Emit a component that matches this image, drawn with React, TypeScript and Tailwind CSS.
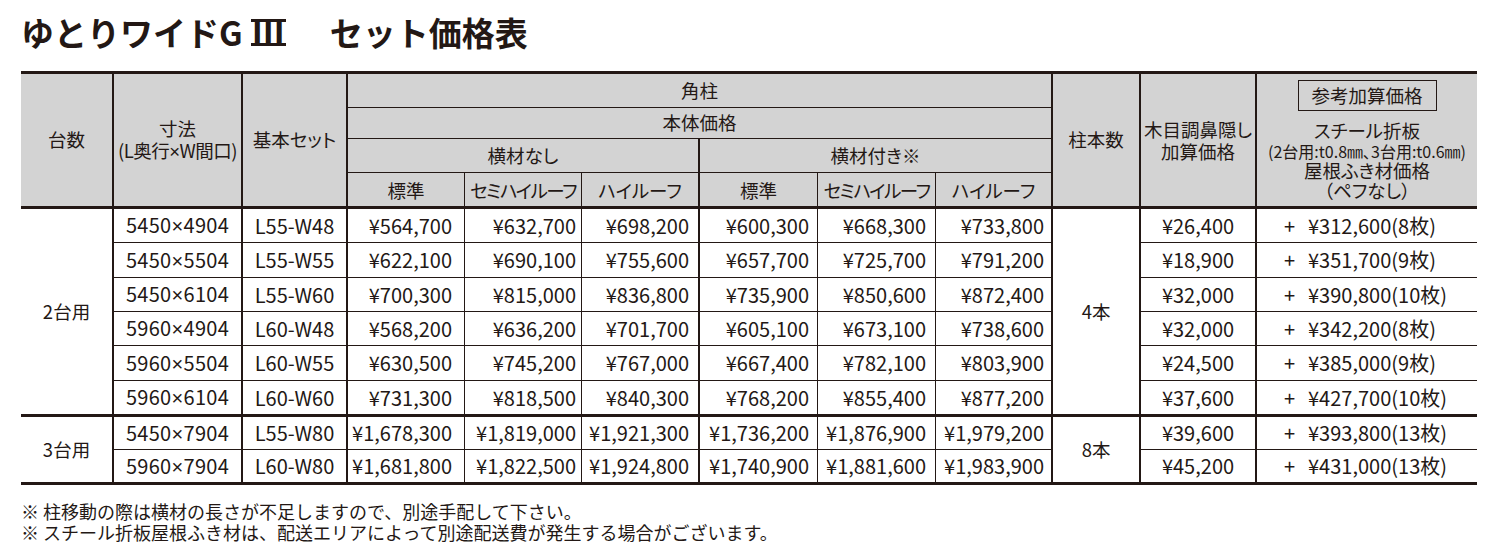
import React from "react";

type Row = { cells: string[]; h: string };

const rows2: string[][] = [
  ["5450×4904", "L55-W48", "¥564,700", "¥632,700", "¥698,200", "¥600,300", "¥668,300", "¥733,800", "¥26,400", "¥312,600(8枚)"],
  ["5450×5504", "L55-W55", "¥622,100", "¥690,100", "¥755,600", "¥657,700", "¥725,700", "¥791,200", "¥18,900", "¥351,700(9枚)"],
  ["5450×6104", "L55-W60", "¥700,300", "¥815,000", "¥836,800", "¥735,900", "¥850,600", "¥872,400", "¥32,000", "¥390,800(10枚)"],
  ["5960×4904", "L60-W48", "¥568,200", "¥636,200", "¥701,700", "¥605,100", "¥673,100", "¥738,600", "¥32,000", "¥342,200(8枚)"],
  ["5960×5504", "L60-W55", "¥630,500", "¥745,200", "¥767,000", "¥667,400", "¥782,100", "¥803,900", "¥24,500", "¥385,000(9枚)"],
  ["5960×6104", "L60-W60", "¥731,300", "¥818,500", "¥840,300", "¥768,200", "¥855,400", "¥877,200", "¥37,600", "¥427,700(10枚)"],
];
const rows3: string[][] = [
  ["5450×7904", "L55-W80", "¥1,678,300", "¥1,819,000", "¥1,921,300", "¥1,736,200", "¥1,876,900", "¥1,979,200", "¥39,600", "¥393,800(13枚)"],
  ["5960×7904", "L60-W80", "¥1,681,800", "¥1,822,500", "¥1,924,800", "¥1,740,900", "¥1,881,600", "¥1,983,900", "¥45,200", "¥431,000(13枚)"],
];

const groups = [
  {
    label: "2台用",
    posts: "4本",
    rows: rows2.map((cells, i): Row => ({
      cells,
      h: ["h-[34px]", "h-[35px]", "h-[34px]", "h-[34px]", "h-[35px]", "h-[36px]"][i],
    })),
  },
  {
    label: "3台用",
    posts: "8本",
    rows: rows3.map((cells, i): Row => ({ cells, h: ["h-[33px]", "h-[35px]"][i] })),
  },
];

const priceBorder = ["border-l-2", "border-l", "border-l", "border-l-2", "border-l", "border-l"];
const pricePad = ["pr-[12px]", "pr-[5px]", "pr-[9px]", "pr-[8px]", "pr-[9px]", "pr-[7px]"];
const subHeads = ["標準", "セミハイルーフ", "ハイルーフ", "標準", "セミハイルーフ", "ハイルーフ"];

const TH = "bg-[#d3d3d3] font-normal border-[#231815] p-0 whitespace-nowrap text-center align-middle";
const TD = "border-[#231815] p-0 whitespace-nowrap align-middle";

function Times() {
  return <span className="font-['Liberation_Sans']">×</span>;
}

function Dim({ v }: { v: string }) {
  const [a, b] = v.split("×");
  return (
    <>
      {a}
      <Times />
      {b}
    </>
  );
}

export default function App() {
  return (
    <div className="w-[1490px] h-[554px] bg-white text-[#231815] font-['Noto_Sans_CJK_JP',sans-serif] pl-[21px] pt-[12px] overflow-hidden">
      <h1 className="text-[33px] font-bold leading-[40px] m-0 whitespace-nowrap">
        ゆとりワイドG
        <span className="inline-block ml-[8px] border-y-[3px] border-[#231815] leading-[21px] px-[1px] align-baseline font-bold">
          Ⅲ
        </span>
        <span className="ml-[44px]">セット価格表</span>
      </h1>
      <table className="mt-[19px] border-separate border-spacing-0 table-fixed w-[1456px] text-[18.5px] [font-feature-settings:'palt']">
        <colgroup>
          <col className="w-[91px]" />
          <col className="w-[129px]" />
          <col className="w-[105px]" />
          <col className="w-[118px]" />
          <col className="w-[117px]" />
          <col className="w-[117px]" />
          <col className="w-[119px]" />
          <col className="w-[118px]" />
          <col className="w-[116px]" />
          <col className="w-[88px]" />
          <col className="w-[116px]" />
          <col className="w-[222px]" />
        </colgroup>
        <thead>
          <tr className="h-[37px]">
            <th rowSpan={4} className={`${TH} border-t-[3px] border-b-[3px]`}>台数</th>
            <th rowSpan={4} className={`${TH} border-t-[3px] border-b-[3px] border-l-2 leading-[22px]`}>
              寸法
              <br />
              <span className="tracking-[-0.5px]">
                (L奥行
                <Times />
                W間口)
              </span>
            </th>
            <th rowSpan={4} className={`${TH} border-t-[3px] border-b-[3px] border-l-2`}>基本セット</th>
            <th colSpan={6} className={`${TH} border-t-[3px] border-l-2 border-b`}>角柱</th>
            <th rowSpan={4} className={`${TH} border-t-[3px] border-b-[3px] border-l-2`}>柱本数</th>
            <th rowSpan={4} className={`${TH} border-t-[3px] border-b-[3px] border-l-2 leading-[22px]`}>
              木目調鼻隠し
              <br />
              加算価格
            </th>
            <th rowSpan={4} className={`${TH} border-t-[3px] border-b-[3px] border-l-2 !align-top`}>
              <div className="flex flex-col items-center pt-[6px]">
                <div className="border border-[#231815] h-[31px] px-[13px] flex items-center leading-none">
                  参考加算価格
                </div>
                <div className="mt-[9px] leading-[20px]">スチール折板</div>
                <div className="mt-[2px] text-[16px] leading-[18px]">(2台用:t0.8㎜、3台用:t0.6㎜)</div>
                <div className="leading-[20px]">屋根ふき材価格</div>
                <div className="leading-[20px]">（ペフなし）</div>
              </div>
            </th>
          </tr>
          <tr className="h-[31px]">
            <th colSpan={6} className={`${TH} border-l-2 border-b`}>本体価格</th>
          </tr>
          <tr className="h-[34px]">
            <th colSpan={3} className={`${TH} border-l-2 border-b`}>横材なし</th>
            <th colSpan={3} className={`${TH} border-l-2 border-b`}>横材付き※</th>
          </tr>
          <tr className="h-[36px]">
            {subHeads.map((s, i) => (
              <th
                key={i}
                className={`${TH} ${priceBorder[i]} border-b-[3px] pt-[3px] ${
                  s === "セミハイルーフ" ? "tracking-[-1.5px]" : ""
                }`}
              >
                {s}
              </th>
            ))}
          </tr>
        </thead>
        <tbody>
          {groups.map((g) =>
            g.rows.map((r, i) => {
              const last = i === g.rows.length - 1;
              const bb = last ? "border-b-[3px]" : "border-b";
              const c = r.cells;
              return (
                <tr key={g.label + i} className={r.h}>
                  {i === 0 && (
                    <td rowSpan={g.rows.length} className={`${TD} border-b-[3px] text-center`}>
                      {g.label}
                    </td>
                  )}
                  <td className={`${TD} ${bb} border-l-2 text-center text-[20px] tracking-[0.3px]`}>
                    <Dim v={c[0]} />
                  </td>
                  <td className={`${TD} ${bb} border-l-2 text-center text-[20px]`}>{c[1]}</td>
                  {c.slice(2, 8).map((p, j) => (
                    <td key={j} className={`${TD} ${bb} ${priceBorder[j]} ${pricePad[j]} text-right text-[20px]`}>
                      {p}
                    </td>
                  ))}
                  {i === 0 && (
                    <td rowSpan={g.rows.length} className={`${TD} border-b-[3px] border-l-2 text-center`}>
                      {g.posts}
                    </td>
                  )}
                  <td className={`${TD} ${bb} border-l-2 text-center text-[20px]`}>{c[8]}</td>
                  <td className={`${TD} ${bb} border-l-2 pl-[27px] text-left text-[20px]`}>
                    <span className="inline-block w-[24px]">+</span>
                    {c[9]}
                  </td>
                </tr>
              );
            })
          )}
        </tbody>
      </table>
      <div className="mt-[16px] text-[18px] leading-[21px] whitespace-nowrap">
        <div>※ 柱移動の際は横材の長さが不足しますので、別途手配して下さい。</div>
        <div>※ スチール折板屋根ふき材は、配送エリアによって別途配送費が発生する場合がございます。</div>
      </div>
    </div>
  );
}
